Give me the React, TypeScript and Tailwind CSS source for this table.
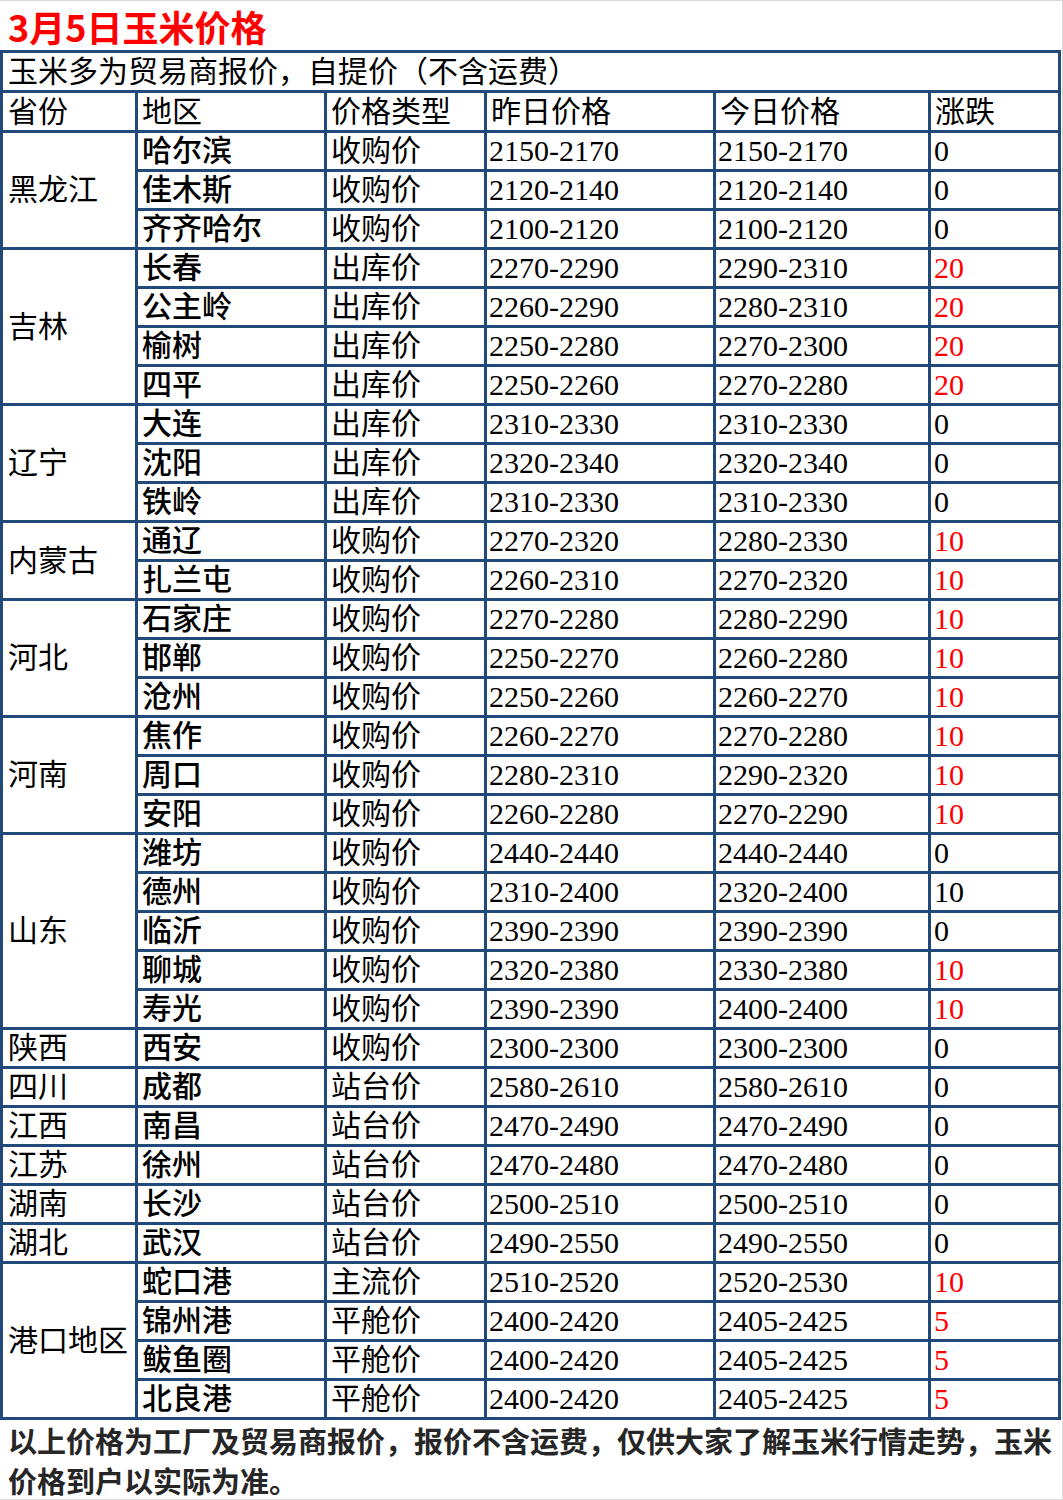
type Row = [string, string, string, string, string, boolean?]

interface Group {
  province: string
  rows: Row[]
}

const groups: Group[] = [
  {
    province: '黑龙江',
    rows: [
      ['哈尔滨', '收购价', '2150-2170', '2150-2170', '0'],
      ['佳木斯', '收购价', '2120-2140', '2120-2140', '0'],
      ['齐齐哈尔', '收购价', '2100-2120', '2100-2120', '0'],
    ],
  },
  {
    province: '吉林',
    rows: [
      ['长春', '出库价', '2270-2290', '2290-2310', '20', true],
      ['公主岭', '出库价', '2260-2290', '2280-2310', '20', true],
      ['榆树', '出库价', '2250-2280', '2270-2300', '20', true],
      ['四平', '出库价', '2250-2260', '2270-2280', '20', true],
    ],
  },
  {
    province: '辽宁',
    rows: [
      ['大连', '出库价', '2310-2330', '2310-2330', '0'],
      ['沈阳', '出库价', '2320-2340', '2320-2340', '0'],
      ['铁岭', '出库价', '2310-2330', '2310-2330', '0'],
    ],
  },
  {
    province: '内蒙古',
    rows: [
      ['通辽', '收购价', '2270-2320', '2280-2330', '10', true],
      ['扎兰屯', '收购价', '2260-2310', '2270-2320', '10', true],
    ],
  },
  {
    province: '河北',
    rows: [
      ['石家庄', '收购价', '2270-2280', '2280-2290', '10', true],
      ['邯郸', '收购价', '2250-2270', '2260-2280', '10', true],
      ['沧州', '收购价', '2250-2260', '2260-2270', '10', true],
    ],
  },
  {
    province: '河南',
    rows: [
      ['焦作', '收购价', '2260-2270', '2270-2280', '10', true],
      ['周口', '收购价', '2280-2310', '2290-2320', '10', true],
      ['安阳', '收购价', '2260-2280', '2270-2290', '10', true],
    ],
  },
  {
    province: '山东',
    rows: [
      ['潍坊', '收购价', '2440-2440', '2440-2440', '0'],
      ['德州', '收购价', '2310-2400', '2320-2400', '10'],
      ['临沂', '收购价', '2390-2390', '2390-2390', '0'],
      ['聊城', '收购价', '2320-2380', '2330-2380', '10', true],
      ['寿光', '收购价', '2390-2390', '2400-2400', '10', true],
    ],
  },
  { province: '陕西', rows: [['西安', '收购价', '2300-2300', '2300-2300', '0']] },
  { province: '四川', rows: [['成都', '站台价', '2580-2610', '2580-2610', '0']] },
  { province: '江西', rows: [['南昌', '站台价', '2470-2490', '2470-2490', '0']] },
  { province: '江苏', rows: [['徐州', '站台价', '2470-2480', '2470-2480', '0']] },
  { province: '湖南', rows: [['长沙', '站台价', '2500-2510', '2500-2510', '0']] },
  { province: '湖北', rows: [['武汉', '站台价', '2490-2550', '2490-2550', '0']] },
  {
    province: '港口地区',
    rows: [
      ['蛇口港', '主流价', '2510-2520', '2520-2530', '10', true],
      ['锦州港', '平舱价', '2400-2420', '2405-2425', '5', true],
      ['鲅鱼圈', '平舱价', '2400-2420', '2405-2425', '5', true],
      ['北良港', '平舱价', '2400-2420', '2405-2425', '5', true],
    ],
  },
]

const spanClass: Record<number, string> = {
  1: 'row-span-1',
  2: 'row-span-2',
  3: 'row-span-3',
  4: 'row-span-4',
  5: 'row-span-5',
}

const headers = ['省份', '地区', '价格类型', '昨日价格', '今日价格', '涨跌']

const cell = 'bg-white flex items-center pl-1 whitespace-nowrap'

export default function App() {
  return (
    <div
      className="w-[1063px] h-[1500px] bg-white border-t border-r border-b border-[#d9d9d9] box-border overflow-hidden"
      style={{ fontFamily: '"Liberation Serif", "Noto Sans CJK SC", serif' }}
    >
      <div
        className="h-[49px] flex items-center pl-2 text-[36px] font-bold text-[#ff0000] leading-none"
        style={{ fontFamily: '"Noto Sans CJK SC", sans-serif' }}
      >
        3月5日玉米价格
      </div>

      <div className="w-[1061px] grid grid-cols-[132px_186px_157px_226px_212px_127px] grid-rows-[37px_37px_repeat(33,36px)] gap-[3px] p-[3px] bg-[#21497a] text-[30px] text-black leading-none">
        <div className={`${cell} col-span-6 pl-[5px]`}>玉米多为贸易商报价，自提价（不含运费）</div>

        {headers.map((h, i) => (
          <div key={h} className={`${cell} ${i === 0 ? 'pl-[5px]' : ''}`}>
            {h}
          </div>
        ))}

        {groups.map((g) => [
          <div
            key={g.province}
            className={`${cell} col-start-1 pl-[5px] ${spanClass[g.rows.length]}`}
          >
            {g.province}
          </div>,
          ...g.rows.map((r) => [
            <div key={r[0] + 'a'} className={`${cell} font-medium`}>{r[0]}</div>,
            <div key={r[0] + 'b'} className={cell}>{r[1]}</div>,
            <div key={r[0] + 'c'} className={`${cell} pl-[2px]`}>{r[2]}</div>,
            <div key={r[0] + 'd'} className={`${cell} pl-[2px]`}>{r[3]}</div>,
            <div key={r[0] + 'e'} className={`${cell} pl-[3px] ${r[5] ? 'text-[#ff0000]' : ''}`}>
              {r[4]}
            </div>,
          ]),
        ])}
      </div>

      <div
        className="pl-2 text-[29px] leading-[40px] font-bold text-[#262626]"
        style={{ fontFamily: '"Noto Sans CJK SC", sans-serif' }}
      >
        以上价格为工厂及贸易商报价，报价不含运费，仅供大家了解玉米行情走势，玉米价格到户以实际为准。
      </div>
    </div>
  )
}
